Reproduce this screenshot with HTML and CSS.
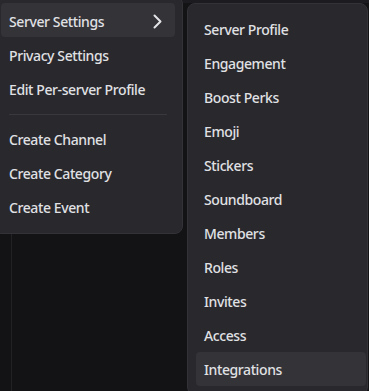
FILE: index.html
```html
<!DOCTYPE html>
<html lang="en">
<head>
    <meta charset="UTF-8">
    <meta name="viewport" content="width=device-width, initial-scale=1.0">
    <title>Server menu</title>
    <link rel="stylesheet" href="styles.css">
</head>
<body>
    <div class="app">
        <div class="topbar"></div>
        <div class="app-body">
            <div class="sidebar"></div>
            <div class="main"></div>
        </div>
    </div>

    <div class="menus">
        <div class="menu">
            <div class="menu-item active">
                <span>Server Settings</span>
                <svg class="chevron" width="18" height="18" viewBox="0 0 18 18">
                    <polyline points="5.5,3.5 11.5,9.5 5.5,15.5" fill="none" stroke="#e3e4e6" stroke-width="2" stroke-linecap="round" stroke-linejoin="round"/>
                </svg>
            </div>
            <div class="menu-item">Privacy Settings</div>
            <div class="menu-item">Edit Per-server Profile</div>
            <div class="separator"></div>
            <div class="menu-item">Create Channel</div>
            <div class="menu-item">Create Category</div>
            <div class="menu-item">Create Event</div>
        </div>

        <div class="menu submenu">
            <div class="menu-item">Server Profile</div>
            <div class="menu-item">Engagement</div>
            <div class="menu-item">Boost Perks</div>
            <div class="menu-item">Emoji</div>
            <div class="menu-item">Stickers</div>
            <div class="menu-item">Soundboard</div>
            <div class="menu-item">Members</div>
            <div class="menu-item">Roles</div>
            <div class="menu-item">Invites</div>
            <div class="menu-item">Access</div>
            <div class="menu-item active">Integrations</div>
        </div>
    </div>
</body>
</html>
```

FILE: styles.css
```css
body {
    margin: 0;
    padding: 0;
    width: 369px;
    height: 391px;
    overflow: hidden;
    position: relative;
    background: #131316;
    font-family: 'Noto Sans', sans-serif;
    color: #e0e1e4;
}

.app {
    height: 100%;
    display: flex;
    flex-direction: column;
}

.topbar {
    height: 3px;
    background: #1c1c20;
}

.app-body {
    flex: 1;
    display: flex;
}

.sidebar {
    width: 11px;
    border-right: 1px solid #222226;
}

.main {
    flex: 1;
}

/* context menus float over the app */
.menus {
    position: absolute;
    top: -4px;
    left: -7px;
    display: flex;
    align-items: flex-start;
    gap: 4px;
}

.menu {
    width: 190px;
    box-sizing: border-box;
    background: #28282d;
    border: 1px solid #323237;
    border-radius: 8px;
    padding: 6px 7px 10px 7px;
}

.menu .menu-item {
    padding-top: 2px;
}

.submenu {
    width: 181px;
    margin-top: 7px;
    padding: 8px 1px 8px 8px;
}

.menu-item {
    box-sizing: border-box;
    height: 34px;
    display: flex;
    align-items: center;
    justify-content: space-between;
    padding: 0 8px;
    border-radius: 4px;
    font-size: 14px;
    font-weight: 500;
    letter-spacing: -0.4px;
    white-space: nowrap;
}

.submenu .menu-item {
    padding-top: 0;
}

.menu-item.active {
    background: #333338;
}

.separator {
    height: 1px;
    margin: 9px 8px 6px;
    background: #38383d;
}
```
